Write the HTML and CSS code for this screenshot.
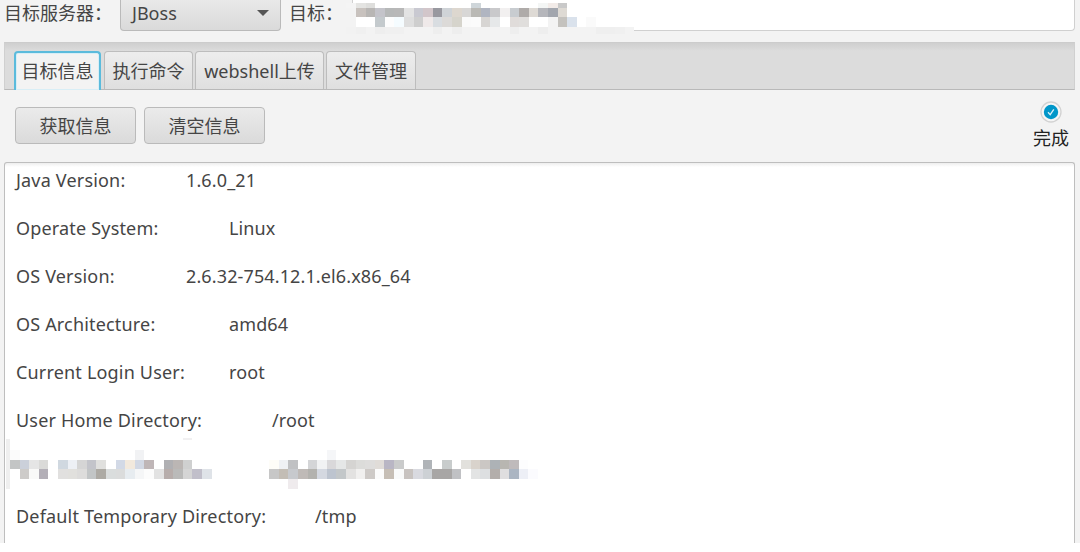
FILE: index.html
```html
<!DOCTYPE html>
<html lang="zh-CN">
<head>
<meta charset="utf-8">
<title>JBoss</title>
<link rel="stylesheet" href="styles.css">
</head>
<body>
<div class="app">
  <header class="target-bar">
    <span class="label server-label">目标服务器：</span>
    <div class="select"><span>JBoss</span><svg width="12" height="6" viewBox="0 0 12 6"><path d="M0 0H12L6 6Z" fill="#555"/></svg></div>
    <span class="label target-label">目标：</span>
    <div class="field"><svg class="mosaic field-mosaic" id="url" width="290" height="34"></svg></div>
  </header>
  <nav class="tabs">
    <div class="tab active">目标信息</div>
    <div class="tab t2">执行命令</div>
    <div class="tab t3">webshell上传</div>
    <div class="tab t4">文件管理</div>
  </nav>
  <section class="actions">
    <div class="buttons"><div class="button">获取信息</div><div class="button">清空信息</div></div>
    <div class="status">
      <svg width="22" height="22" viewBox="0 0 22 22"><circle cx="11" cy="11" r="10" fill="#f5f5f5" stroke="#d2d2d2" stroke-width="1.3"/><circle cx="11" cy="11" r="7.2" fill="#0096c9"/><path d="M8 11.2L10.2 13.6L13.8 8.4" fill="none" stroke="#d9f0f8" stroke-width="1.3"/></svg>
      <span>完成</span>
    </div>
  </section>
  <main class="output">
    <div class="row"><span class="key k1">Java Version:</span><span>1.6.0_21</span></div>
    <div class="row"><span class="key k2">Operate System:</span><span>Linux</span></div>
    <div class="row"><span class="key k1">OS Version:</span><span>2.6.32-754.12.1.el6.x86_64</span></div>
    <div class="row"><span class="key k2">OS Architecture:</span><span>amd64</span></div>
    <div class="row"><span class="key k2">Current Login User:</span><span>root</span></div>
    <div class="row"><span class="key k3">User Home Directory:</span><span>/root</span></div>
    <div class="row"><svg class="mosaic row-mosaic" id="hidden-row" width="530" height="48"><rect x="1" y="-5" width="4" height="50" fill="#efefef"/></svg></div>
    <div class="row"><span class="key k4">Default Temporary Directory:</span><span>/tmp</span></div>
  </main>
</div>
<script src="mosaic.js"></script>
</body>
</html>
```
FILE: mosaic.js
```js
// Draws a censored strip: each row is [y, height, first column, colours]; "-" skips a cell.
function mosaic(id, left, rows) {
  const svg = document.getElementById(id);
  rows.forEach(([y, h, first, colours]) => colours.split(" ").forEach((c, i) => {
    if (c === "-") return;
    const r = document.createElementNS("http://www.w3.org/2000/svg", "rect");
    const x = Math.round(left + (first + i) * 9.6);
    r.setAttribute("x", x);
    r.setAttribute("y", y);
    r.setAttribute("width", Math.round(left + (first + i + 1) * 9.6) - x);
    r.setAttribute("height", h);
    r.setAttribute("fill", "#" + c);
    svg.appendChild(r);
  }));
}
mosaic("url", 7, [
  [3, 5, -1, "f4f4f4 e4e4e2 dededc - - - - - - - - - - cfd6da"],
  [3, 5, 19, "f4f6f5 f2ebe8 c9c9c9"],
  [8, 9, -1, "f3f3f3 c8c2be b8b6b4 c4c4ca b6b8b8 b8b8b8 e3e3e3 c9c9d1 d2c6ca 98989f cfd3d7 ddd7cf d8d7d6 bab9b5 b0b5c1 c9c9cb f2f0f0 c8ccd0 afaba9 dedad5 b5b6bb a2a6ae dedad4"],
  [17, 10, -1, "f3f3f3 fff fff c4cacd fdfdfd f5fcff dedede cecece efe9e9 d9dde1 dcdad8 d6d4cc fafafa fbfbfb d7d5d3 e6e8e9 fff e0dcda e0dedc fff fff f3f3f3 c4c2be dae2ec fff fafafa"],
  [27, 7, -1, "f2f2f2 f0f0f0 f3f3f3 eeeeee f0f0f0 f0f0f0 f3f3f3 f3f3f3 f3f3f3 eeeeee f3f3f3 eeeeee f3f3f3 f3f3f3 f3f3f3 f3f3f3 f3f3f3 eeeeee f3f3f3 f3f3f3 eeeeee f3f3f3 f3f3f3 f3f3f3 f3f3f3 f3f3f3 efefef efefef f0f0f0 f3f3f3"]
]);
mosaic("hidden-row", 5, [
  [-6, 2, 18, "f1f0f1"],
  [6, 10, 0, "fbfbfb - - - - - - - - - - - - f1f2f4"],
  [6, 10, 33, "f5f6f8"],
  [16, 9, 0, "c3c5c5 cbd0da e5e5e5 dadad8 - d0d8e0 edf0f5 d5d5d5 c3c4ca e0e0de - d2d9e6 f2e9dd d2d8e4 bfb6b7 - b0b0b3 bbb6b4 cfd0d0"],
  [25, 10, 0, "- cdcbc9 f9f9f8 b3afb7 - e1e0df e1e0dd dddcdb c2c5c6 adaaa4 dadddd dbdcdc e7ecf0 f5f6f7 fcfcfc e2e2e2 b7adab babab9 d5d5d5 c1bfca dfe3e8"],
  [16, 9, 27, "fefdf8 eff1f4 c0c1c3 - d4d5d7 f1f2f3 d9d8da e5e7e7 d5d4d2 dcdcda dedddc e0dcd8 b9b6c4 cacbcb - - b0b4b8 - c8cccc - e2e1dd d9d3cc cbc7c4 adb2b6 b8b6b1 bfbabb fdfdfe"],
  [25, 10, 27, "c7c7c7 c3bdb5 c7c9cd bfbab7 b3b2ae d4d8e0 bdc4cf c3c7c9 e3e2e1 f1f0ef cecac7 fbfbfb c6beb5 f9fafa c8c3c0 d9dae0 cdd1d5 a8a6a5 a8a6a5 c0c1c4 fff e3e4e4 dddfe1 b3aeab dfdedf abb5c2 edeff6 fbfbfe"],
  [35, 10, 29, "efebed"]
]);
```
FILE: styles.css
```css
* { box-sizing: border-box; }
body {
  margin: 0;
  background: #fff;
  color: #454545;
  font: 18px/24px "Noto Sans", "Noto Sans CJK SC", sans-serif;
}
.app { display: flex; flex-direction: column; height: 543px; overflow: hidden; background: #f3f3f3; }
.target-bar { display: flex; flex: none; height: 42px; }
.label { white-space: nowrap; }
.server-label { width: 120px; padding-left: 4px; line-height: 26px; }
.target-label { width: 71px; padding-left: 8px; line-height: 26px; }
.select {
  display: flex; justify-content: space-between; align-items: center;
  width: 161px; height: 31px; padding: 0 11px 5px 11px;
  border: 1px solid #bababa; border-top: 0; border-radius: 0 0 4px 4px;
  background: linear-gradient(#e9e9e9, #dadada);
}
.field { width: 723px; height: 31px; border: 1px solid #d0d0d0; border-top: 0; border-radius: 0 0 4px 4px; background: #fff; }
.mosaic { display: block; overflow: visible; }
.field-mosaic { margin-left: -4px; }
.row-mosaic { margin-top: -12px; }
.tabs {
  display: flex; flex: none; height: 48px; margin: 0 5px 0 4px; padding: 8px 0 0 9px; gap: 2px;
  border: 1px solid #d0d0d0; border-top-color: #ccc; border-bottom-color: #b9b9b9;
  background: linear-gradient(#cfcfcf, #dcdcdc 8px);
}
.tab {
  height: 38px; width: 89px; padding-top: 7px; text-align: center; white-space: nowrap;
  border: 1px solid #bdbdbd; border-bottom: 0; border-radius: 4px 4px 0 0;
  background: linear-gradient(#ededed, #dfdfdf);
}
.tab.active { width: 87px; height: 39px; margin-right: 1px; padding-top: 6px; border: 2px solid #5bbbdc; border-bottom: 0; background: #f3f3f3; box-shadow: inset 0 0 0 1px #d8eef6; }
.tab.t3 { width: 129px; }
.tab.t4 { width: 90px; }
.actions { display: flex; flex: none; justify-content: space-between; height: 72px; padding: 11px 11px 0 15px; }
.buttons { display: flex; gap: 8px; padding-top: 6px; }
.button {
  width: 121px; height: 37px; line-height: 36px; text-align: center;
  border: 1px solid #bababa; border-radius: 4px; background: linear-gradient(#ebebeb, #dadada);
}
.status { display: flex; flex-direction: column; align-items: center; color: #222; }
.status span { margin-top: 3px; }
.output {
  flex: 1; min-height: 0; margin: 0 5px 0 4px; padding-top: 5px; border: 1px solid #bebebe; border-bottom: 0;
  border-radius: 3px 3px 0 0; background: linear-gradient(#eee, #fff 4px);
  letter-spacing: .12px;
}
.row { display: flex; height: 48px; white-space: nowrap; }
.key { padding-left: 11px; letter-spacing: .18px; }
.k1 { width: 181px; }
.k2 { width: 224px; }
.k3 { width: 267px; }
.k4 { width: 310px; }
```
